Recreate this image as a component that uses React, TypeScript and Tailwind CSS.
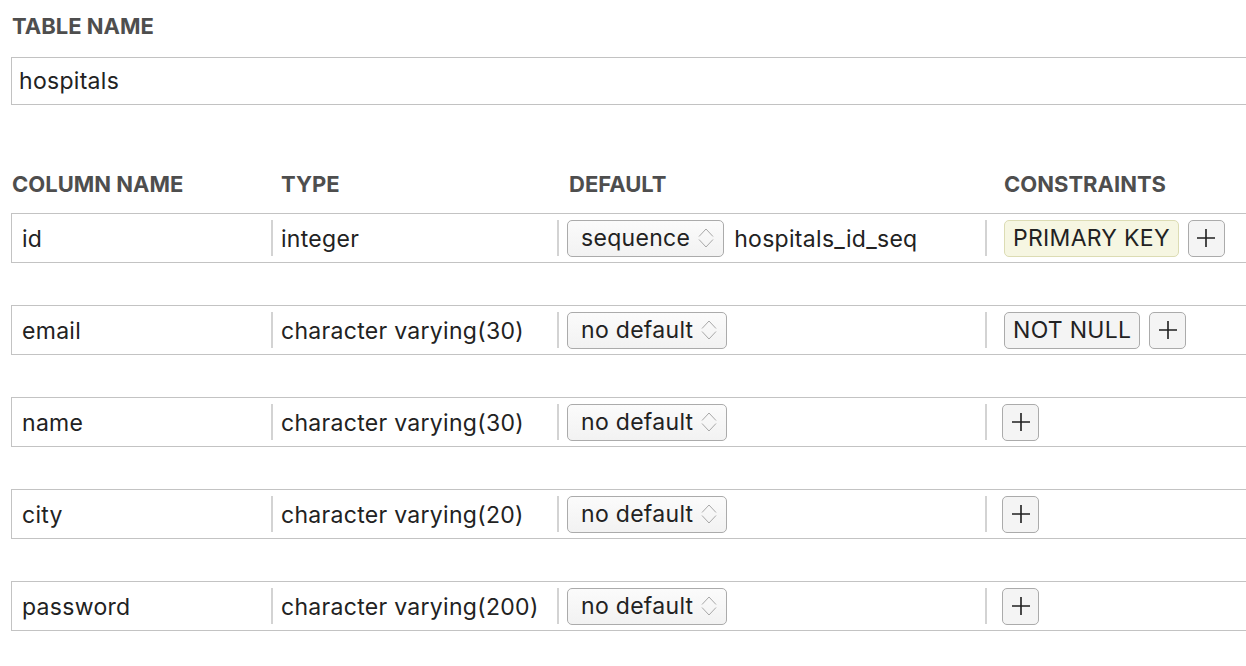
import React from "react";

type Row = {
  name: string;
  type: string;
  def: string;
  seq?: string;
  constraint?: "pk" | "nn";
};

const rows: Row[] = [
  { name: "id", type: "integer", def: "sequence", seq: "hospitals_id_seq", constraint: "pk" },
  { name: "email", type: "character varying(30)", def: "no default", constraint: "nn" },
  { name: "name", type: "character varying(30)", def: "no default" },
  { name: "city", type: "character varying(20)", def: "no default" },
  { name: "password", type: "character varying(200)", def: "no default" },
];

const Chevrons = () => (
  <svg width="16" height="24" viewBox="0 0 16 24" fill="none" stroke="#a8a8a8" strokeWidth="1">
    <path d="M1 10.5 L8 3 L15 10.5" />
    <path d="M1 13.5 L8 21 L15 13.5" />
  </svg>
);

const Select = ({ label }: { label: string }) => (
  <div className="flex h-[37px] items-center gap-[8px] rounded-[5px] border border-[#ababab] bg-gradient-to-b from-[#fbfbfb] to-[#f2f2f2] pl-[13px] pr-[9px]">
    <span>{label}</span>
    <Chevrons />
  </div>
);

const PlusButton = () => (
  <div className="flex h-[37px] w-[37px] items-center justify-center rounded-[5px] border border-[#ababab] bg-[#f4f4f4]">
    <svg width="20" height="20" viewBox="0 0 20 20" stroke="#1f1f1f" strokeWidth="1.6">
      <path d="M10 1 V19 M1 10 H19" />
    </svg>
  </div>
);

const Sep = () => <div className="my-[6px] w-[2px] self-stretch bg-[#d3d3d3]" />;

export default function App() {
  return (
    <div className="h-[666px] w-[1246px] overflow-hidden bg-white font-['Inter','Liberation_Sans',sans-serif] text-[23px] tracking-[0.3px] text-[#222]">
      <div className="pl-[11px]">
        <div className="pl-[1px] pt-[14px] text-[22px] font-bold leading-[24px] tracking-normal text-[#4e4e4e]">
          TABLE NAME
        </div>
        <div className="mt-[19px] flex h-[48px] w-[1260px] items-center border border-[#c2c2c2] pl-[7px]">
          hospitals
        </div>

        <div className="mt-[67px] flex h-[24px] items-center text-[22px] font-bold tracking-normal text-[#4e4e4e]">
          <div className="w-[260px] pl-[1px]">COLUMN NAME</div>
          <div className="w-[286px] pl-[10px]">TYPE</div>
          <div className="w-[428px] pl-[12px]">DEFAULT</div>
          <div className="pl-[19px]">CONSTRAINTS</div>
        </div>

        <div className="mt-[17px] flex flex-col gap-[42px]">
          {rows.map((r) => (
            <div
              key={r.name}
              className="flex h-[50px] w-[1260px] items-stretch border border-r-0 border-[#c3c3c3]"
            >
              <div className="flex w-[259px] items-center pl-[10px] pt-[2px]">{r.name}</div>
              <Sep />
              <div className="flex w-[284px] items-center pl-[8px] pt-[2px]">{r.type}</div>
              <Sep />
              <div className="flex w-[426px] items-center gap-[10px] pl-[8px]">
                <Select label={r.def} />
                {r.seq && <span className="pt-[2px]">{r.seq}</span>}
              </div>
              <Sep />
              <div
                className={
                  r.constraint
                    ? "flex items-center gap-[9px] pl-[17px]"
                    : "flex items-center gap-[9px] pl-[15px]"
                }
              >
                {r.constraint === "pk" && (
                  <div className="flex h-[37px] items-center rounded-[5px] border border-[#dcdcb4] bg-[#f6f6e2] px-[8px]">
                    PRIMARY KEY
                  </div>
                )}
                {r.constraint === "nn" && (
                  <div className="flex h-[37px] items-center rounded-[5px] border border-[#ababab] bg-[#f4f4f4] px-[8px]">
                    NOT NULL
                  </div>
                )}
                <PlusButton />
              </div>
            </div>
          ))}
        </div>
      </div>
    </div>
  );
}
